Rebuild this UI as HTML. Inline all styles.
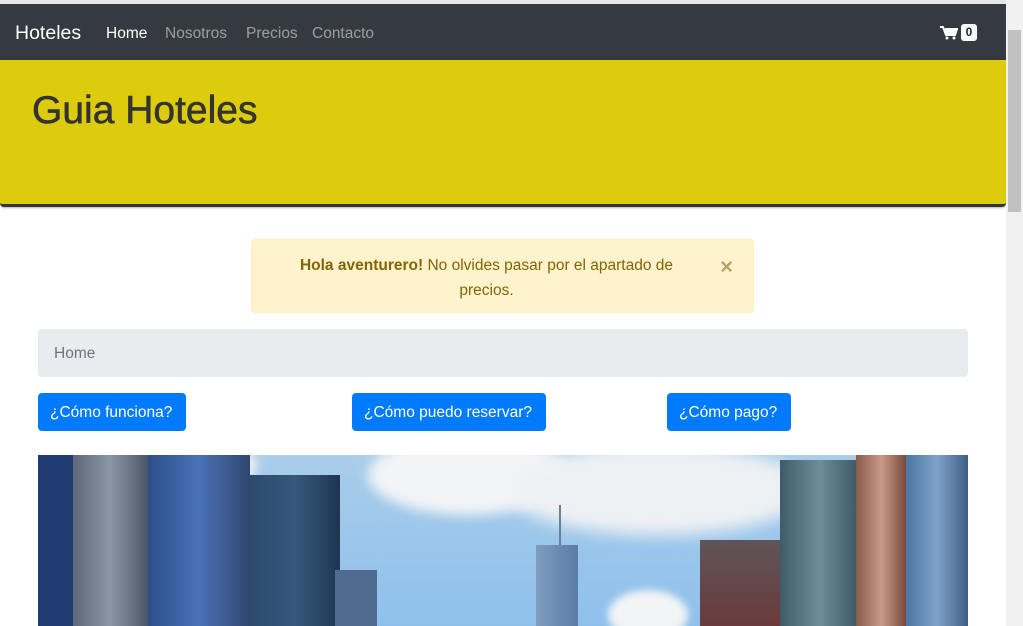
<!DOCTYPE html>
<html><head><meta charset="utf-8"><style>
*{margin:0;padding:0;box-sizing:border-box}
body{width:1023px;height:626px;overflow:hidden;background:#fff;font-family:"Liberation Sans","DejaVu Sans",sans-serif;position:relative}
.top{position:absolute;left:0;top:0;width:1006px;height:4px;background:#e6e6e6}
.nav{position:absolute;left:0;top:4px;width:1006px;height:56px;background:#343a40}
.nav span{position:absolute;top:21px;font-size:15.5px;color:rgba(255,255,255,.5)}
.brand{position:absolute;left:15px;top:18px;font-size:19.5px;color:#fff}
.jumbo{position:absolute;left:0;top:60px;width:1006px;height:147px;background:#ddcc0d;border-bottom:3px solid #333;border-radius:0 0 4px 4px;box-shadow:0 1px 2px rgba(0,0,0,.3)}
.jumbo h1{position:absolute;left:32px;top:29px;font-size:39px;font-weight:500;color:#333;-webkit-text-stroke:0.6px #333}
.alert{position:absolute;left:251px;top:239px;width:503px;height:74px;background:#fff3cd;border:1px solid #ffeeba;border-radius:4px;color:#856404;font-size:15.5px;text-align:center;line-height:25px;padding:13px 62px 0 30px}
.x{position:absolute;right:20px;top:14px;font-size:22px;color:#b9a56c;font-weight:bold}
.bc{position:absolute;left:38px;top:329px;width:930px;height:48px;background:#e9ecef;border-radius:4px;color:#6c757d;font-size:15.5px;padding:16px 16px}
.btn{position:absolute;top:393px;height:38px;background:#007bff;color:#fff;font-size:15.5px;border-radius:4px;padding:11px 12px 0}
.img{position:absolute;left:38px;top:455px;width:930px;height:171px;background:linear-gradient(#a9cdea,#8fc0ec);overflow:hidden}
.img div{position:absolute}
.sb{position:absolute;left:1006px;top:0;width:17px;height:626px;background:#f1f1f1}
</style></head><body>
<div class="top"></div>
<div class="nav">
<div class="brand">Hoteles</div>
<span style="left:106px;color:#fff">Home</span>
<span style="left:165px">Nosotros</span>
<span style="left:246px">Precios</span>
<span style="left:312px">Contacto</span>
<svg style="position:absolute;left:940px;top:22px" width="18" height="14" viewBox="0 0 18 14"><path d="M0 1h3l3 8h9l2-6H5" fill="none" stroke="#fff" stroke-width="2"/><rect x="5" y="3" width="11" height="5" fill="#fff"/><circle cx="7" cy="12" r="1.5" fill="#fff"/><circle cx="14" cy="12" r="1.5" fill="#fff"/></svg>
<div style="position:absolute;left:961px;top:20px;width:16px;height:17px;background:#f8f9fa;border-radius:3px;font-size:12px;font-weight:bold;color:#212529;text-align:center;line-height:17px">0</div>
</div>
<div class="jumbo"><h1>Guia Hoteles</h1></div>
<div class="alert"><b>Hola aventurero!</b> No olvides pasar por el apartado de precios.<div class="x">×</div></div>
<div class="bc">Home</div>
<div class="btn" style="left:38px;width:148px">¿Cómo funciona?</div>
<div class="btn" style="left:352px;width:194px">¿Cómo puedo reservar?</div>
<div class="btn" style="left:667px;width:124px">¿Cómo pago?</div>
<div class="img">
<div style="left:330px;top:-20px;width:200px;height:80px;background:#f2f4f6;border-radius:50%;filter:blur(6px)"></div>
<div style="left:470px;top:-10px;width:300px;height:90px;background:#eef1f4;border-radius:50%;filter:blur(8px)"></div>
<div style="left:160px;top:-10px;width:60px;height:40px;background:#e8eef4;border-radius:50%;filter:blur(5px)"></div>
<div style="left:570px;top:135px;width:80px;height:50px;background:#f2f4f6;border-radius:50%;filter:blur(4px)"></div>
<div style="left:0;top:0;width:35px;height:171px;background:#203b6f"></div>
<div style="left:35px;top:0;width:75px;height:171px;background:linear-gradient(90deg,#5d6878,#8c97a6,#4a5566)"></div>
<div style="left:110px;top:0;width:102px;height:171px;background:linear-gradient(90deg,#2c4f8a,#4a72b8,#30466e)"></div>
<div style="left:212px;top:20px;width:90px;height:151px;background:linear-gradient(90deg,#2b4a6c,#37587c,#1f3552)"></div>
<div style="left:297px;top:115px;width:42px;height:56px;background:#4e6a8e"></div>
<div style="left:498px;top:90px;width:42px;height:81px;background:linear-gradient(90deg,#7f9ec0,#5a7ca5)"></div>
<div style="left:521px;top:50px;width:2px;height:40px;background:#6b7f96"></div>
<div style="left:662px;top:85px;width:95px;height:86px;background:linear-gradient(#5e5558,#6b3a3c)"></div>
<div style="left:742px;top:5px;width:80px;height:166px;background:linear-gradient(90deg,#3f5b6a,#6d8d99,#3a5560)"></div>
<div style="left:818px;top:0;width:50px;height:171px;background:linear-gradient(90deg,#8a5a4c,#c89a86,#7a4a3c)"></div>
<div style="left:868px;top:0;width:62px;height:171px;background:linear-gradient(90deg,#4b76a6,#7fa3c8,#3f5f86)"></div>
</div>
<div class="sb"><div style="position:absolute;left:2px;top:30px;width:13px;height:182px;background:#c1c1c1"></div></div>
</body></html>
